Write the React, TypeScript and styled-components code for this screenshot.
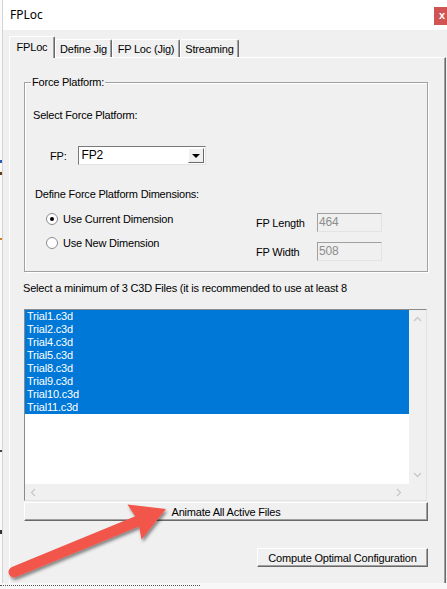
import React from 'react';
import styled, { createGlobalStyle } from 'styled-components';

const Global = createGlobalStyle`
  html, body { margin: 0; padding: 0; }
  body {
    width: 447px; height: 589px; overflow: hidden; background: #f0f0f0;
    font-family: "Liberation Sans", Arial, sans-serif;
  }
  #root { width: 447px; height: 589px; }
`;

const Screen = styled.div`
  position: relative;
  width: 447px;
  height: 589px;
  display: flex;
  flex-direction: column;
  overflow: hidden;
  background: #f4f4f4;
  font-size: 11px;
  letter-spacing: -0.2px;
  color: #000;
`;

const Desktop = styled.div`
  flex: 1;
  display: flex;
  min-height: 0;
`;

const LeftStrip = styled.div`
  width: 2px;
  border-right: 1px solid #d4d4d4;
  background:
    linear-gradient(to bottom,
      #fafafa 0 160px, #2a5fb0 160px 163px, #fafafa 163px 172px, #6a3a10 172px 175px,
      #fafafa 175px 238px, #d08020 238px 240px, #fafafa 240px 450px, #444 450px 452px,
      #fafafa 452px 530px, #333 530px 534px, #fafafa 534px);
`;

const Window = styled.div`
  flex: 1;
  display: flex;
  flex-direction: column;
  min-width: 0;
`;

const TitleBar = styled.div`
  height: 30px;
  background: #fff;
  display: flex;
  align-items: flex-start;
  padding-left: 7px;
`;

const Title = styled.div`
  font-family: "Segoe UI", "Noto Sans", "Open Sans", sans-serif;
  font-size: 12px;
  letter-spacing: 0;
  line-height: 30px;
  color: #000;
`;

const CloseBtn = styled.div`
  margin-left: auto;
  margin-top: 7px;
  width: 13px;
  height: 18px;
  background: #d05454;
  color: #fff;
  font-size: 11px;
  font-weight: bold;
  letter-spacing: 0;
  line-height: 17px;
  padding-left: 5px;
  box-sizing: border-box;
`;

const Client = styled.div`
  flex: 1;
  background: #f0f0f0;
  display: flex;
  flex-direction: column;
  padding: 6px 1px 0 6px;
  min-height: 0;
`;

const TabStrip = styled.div`
  display: flex;
  align-items: flex-end;
  height: 21px;
  position: relative;
  z-index: 1;
`;

const Tab = styled.div<{ $active?: boolean; $w: number }>`
  box-sizing: border-box;
  width: ${(p) => p.$w}px;
  height: ${(p) => (p.$active ? '22px' : '18px')};
  margin-bottom: ${(p) => (p.$active ? '-1px' : '0')};
  padding-bottom: ${(p) => (p.$active ? '2px' : '0')};
  background: #f0f0f0;
  border-top: 1px solid #fff;
  border-left: 1px solid #fff;
  border-right: 1px solid #696969;
  box-shadow: inset -1px 0 0 #a0a0a0;
  border-radius: 2px 2px 0 0;
  display: flex;
  align-items: center;
  justify-content: center;
  font-size: 11px;
  white-space: nowrap;
`;

const Panel = styled.div`
  flex: 1;
  display: flex;
  flex-direction: column;
  border-top: 1px solid #fff;
  border-left: 1px solid #fff;
  border-right: 1px solid #696969;
  box-shadow: inset -1px 0 0 #a0a0a0;
  padding: 24px 17px 0 14px;
  min-height: 0;
`;

const GroupBox = styled.div`
  position: relative;
  box-sizing: border-box;
  height: 190px;
  border: 1px solid #a0a0a0;
  box-shadow: inset 1px 1px 0 #fff, 1px 1px 0 #fff;
  display: flex;
  flex-direction: column;
  padding-left: 8px;
`;

const Legend = styled.span`
  position: absolute;
  top: -7px;
  left: 6px;
  padding: 0 1px;
  background: #f0f0f0;
  line-height: 13px;
`;

const Label = styled.div<{ $top: number; $left?: number }>`
  margin-top: ${(p) => p.$top}px;
  margin-left: ${(p) => p.$left ?? 0}px;
  line-height: 13px;
  white-space: nowrap;
`;

const FPRow = styled.div`
  margin-top: 24px;
  display: flex;
  align-items: center;
  height: 19px;
  padding-left: 17px;
  gap: 11px;
`;

const Combo = styled.div`
  box-sizing: border-box;
  width: 128px;
  height: 19px;
  background: #fff;
  border: 1px solid;
  border-color: #7a7a7a #e3e3e3 #e3e3e3 #7a7a7a;
  display: flex;
  align-items: stretch;
`;

const ComboText = styled.div`
  flex: 1;
  padding-left: 3px;
  line-height: 17px;
  font-size: 12px;
`;

const ComboButton = styled.div`
  box-sizing: border-box;
  width: 16px;
  margin: 1px;
  background: #f0f0f0;
  border: 1px solid;
  border-color: #fff #696969 #696969 #fff;
  display: flex;
  align-items: center;
  justify-content: center;
  &::after {
    content: '';
    border-left: 4px solid transparent;
    border-right: 4px solid transparent;
    border-top: 4px solid #000;
    margin-top: 1px;
  }
`;

const DimSection = styled.div`
  margin-top: 8px;
  display: flex;
  align-items: flex-start;
`;

const RadioColumn = styled.div`
  margin-left: 13px;
  display: flex;
  flex-direction: column;
  gap: 4px;
`;

const RadioRow = styled.div`
  height: 20px;
  display: flex;
  align-items: center;
  gap: 5px;
`;

const Radio = styled.span<{ $checked?: boolean }>`
  box-sizing: border-box;
  width: 12px;
  height: 12px;
  border-radius: 50%;
  border: 1px solid #8c8c8c;
  background: #fff;
  display: flex;
  align-items: center;
  justify-content: center;
  &::after {
    content: '';
    width: 4px;
    height: 4px;
    border-radius: 50%;
    background: ${(p) => (p.$checked ? '#000' : 'transparent')};
  }
`;

const FieldColumn = styled.div`
  margin-left: auto;
  margin-right: 45px;
  padding-top: 4px;
  display: flex;
  flex-direction: column;
  gap: 10px;
`;

const FieldRow = styled.div`
  display: grid;
  grid-template-columns: 61px 65px;
  align-items: center;
  height: 19px;
`;

const TextBox = styled.div`
  box-sizing: border-box;
  height: 19px;
  background: #f0f0f0;
  border: 1px solid;
  border-color: #a0a0a0 #e3e3e3 #e3e3e3 #a0a0a0;
  color: #8d8d8d;
  padding-left: 1px;
  line-height: 17px;
  font-size: 12px;
`;

const Hint = styled.div`
  margin-top: 10px;
  margin-left: -1px;
  line-height: 13px;
  white-space: nowrap;
`;

const ListBox = styled.div`
  margin-top: 14px;
  margin-right: 1px;
  height: 192px;
  box-sizing: border-box;
  border: 1px solid;
  border-color: #8a8a8a #e3e3e3 #e3e3e3 #8a8a8a;
  display: grid;
  grid-template-columns: 1fr 17px;
  grid-template-rows: 1fr 16px;
  background: #f0f0f0;
`;

const Items = styled.div`
  background: #fff;
  overflow: hidden;
`;

const Item = styled.div`
  height: 13px;
  line-height: 13px;
  padding-left: 2px;
  background: #0078d7;
  color: #fff;
  font-size: 11px;
`;

const VScroll = styled.div`
  display: flex;
  flex-direction: column;
  justify-content: space-between;
  align-items: center;
  padding: 6px 0 6px;
`;

const HScroll = styled.div`
  display: flex;
  justify-content: space-between;
  align-items: center;
  padding: 0 7px 0 5px;
`;

const Corner = styled.div`
  background: #f0f0f0;
`;

const Button = styled.div`
  box-sizing: border-box;
  height: 19px;
  background: #f0f0f0;
  border: 1px solid;
  border-color: #fff #696969 #696969 #fff;
  box-shadow: inset -1px -1px 0 #a0a0a0;
  display: flex;
  align-items: center;
  justify-content: center;
  white-space: nowrap;
`;

const AnimateButton = styled(Button)`
  margin-top: 1px;
`;

const ButtonRow = styled.div`
  margin-top: 27px;
  display: flex;
  justify-content: flex-end;
`;

const ComputeButton = styled(Button)`
  width: 171px;
`;

const BottomStrip = styled.div`
  height: 6px;
  background: #f7f7f7;
  display: flex;
`;

const Dotted = styled.div`
  width: 200px;
  margin-top: 2px;
  border-top: 1px dotted #555;
`;

const Overlay = styled.svg`
  position: absolute;
  left: 0;
  top: 0;
  pointer-events: none;
`;

const Chevron = ({ dir }: { dir: 'up' | 'down' | 'left' | 'right' }) => {
  const pts = {
    up: '1,5 4.5,1.5 8,5',
    down: '1,1 4.5,4.5 8,1',
    left: '5,1 1.5,4.5 5,8',
    right: '1,1 4.5,4.5 1,8',
  }[dir];
  const vertical = dir === 'up' || dir === 'down';
  return (
    <svg width={vertical ? 9 : 6} height={vertical ? 6 : 9}>
      <polyline points={pts} fill="none" stroke="#c8c8c8" strokeWidth="1.3" />
    </svg>
  );
};

const files = ['Trial1.c3d', 'Trial2.c3d', 'Trial4.c3d', 'Trial5.c3d', 'Trial8.c3d', 'Trial9.c3d', 'Trial10.c3d', 'Trial11.c3d'];

const tabs = [
  { label: 'FPLoc', w: 46, active: true },
  { label: 'Define Jig', w: 57 },
  { label: 'FP Loc (Jig)', w: 68 },
  { label: 'Streaming', w: 59 },
];

export default function App() {
  return (
    <>
      <Global />
      <Screen>
        <Desktop>
          <LeftStrip />
          <Window>
            <TitleBar>
              <Title>FPLoc</Title>
              <CloseBtn>x</CloseBtn>
            </TitleBar>
            <Client>
              <TabStrip>
                {tabs.map((t) => (
                  <Tab key={t.label} $w={t.w} $active={t.active}>
                    {t.label}
                  </Tab>
                ))}
              </TabStrip>
              <Panel>
                <GroupBox>
                  <Legend>Force Platform:</Legend>
                  <Label $top={26}>Select Force Platform:</Label>
                  <FPRow>
                    <span>FP:</span>
                    <Combo>
                      <ComboText>FP2</ComboText>
                      <ComboButton />
                    </Combo>
                  </FPRow>
                  <Label $top={23} $left={2}>Define Force Platform Dimensions:</Label>
                  <DimSection>
                    <RadioColumn>
                      <RadioRow>
                        <Radio $checked />
                        <span>Use Current Dimension</span>
                      </RadioRow>
                      <RadioRow>
                        <Radio />
                        <span>Use New Dimension</span>
                      </RadioRow>
                    </RadioColumn>
                    <FieldColumn>
                      <FieldRow>
                        <span>FP Length</span>
                        <TextBox>464</TextBox>
                      </FieldRow>
                      <FieldRow>
                        <span>FP Width</span>
                        <TextBox>508</TextBox>
                      </FieldRow>
                    </FieldColumn>
                  </DimSection>
                </GroupBox>
                <Hint>Select a minimum of 3 C3D Files (it is recommended to use at least 8</Hint>
                <ListBox>
                  <Items>
                    {files.map((f) => (
                      <Item key={f}>{f}</Item>
                    ))}
                  </Items>
                  <VScroll>
                    <Chevron dir="up" />
                    <Chevron dir="down" />
                  </VScroll>
                  <HScroll>
                    <Chevron dir="left" />
                    <Chevron dir="right" />
                  </HScroll>
                  <Corner />
                </ListBox>
                <AnimateButton>Animate All Active Files</AnimateButton>
                <ButtonRow>
                  <ComputeButton>Compute Optimal Configuration</ComputeButton>
                </ButtonRow>
              </Panel>
            </Client>
          </Window>
        </Desktop>
        <BottomStrip>
          <Dotted />
        </BottomStrip>
        <Overlay width={447} height={589} viewBox="0 0 447 589">
          <defs>
            <filter id="arrowShadow" x="-20%" y="-40%" width="140%" height="180%">
              <feDropShadow dx="1.5" dy="2.5" stdDeviation="1.6" floodColor="#000" floodOpacity="0.45" />
            </filter>
          </defs>
          <g filter="url(#arrowShadow)" fill="#f2544a">
            <line x1="14" y1="572" x2="138" y2="521" stroke="#f2544a" strokeWidth="11" strokeLinecap="round" />
            <polygon points="166,509 127.5,504.5 138,520.5 141.5,539.5" />
          </g>
        </Overlay>
      </Screen>
    </>
  );
}
